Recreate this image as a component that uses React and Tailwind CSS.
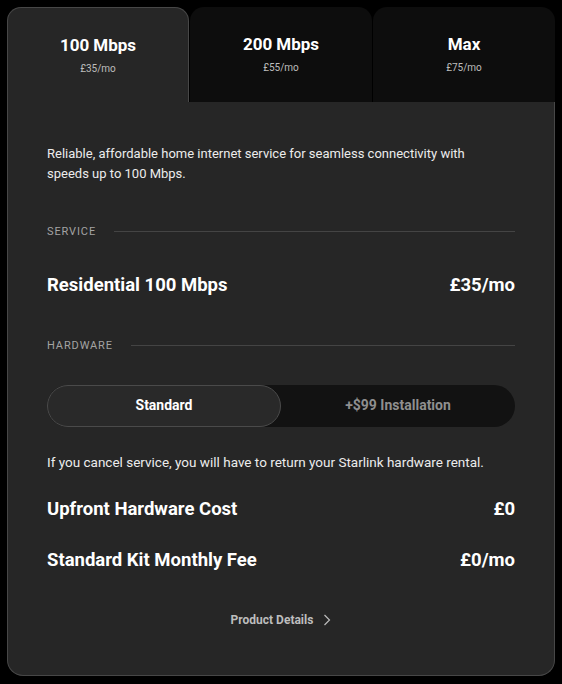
import React, { useState } from 'react';

const plans = [
  { name: '100 Mbps', price: '£35/mo' },
  { name: '200 Mbps', price: '£55/mo' },
  { name: 'Max', price: '£75/mo' },
];

const SectionLabel = ({ children }) => (
  <div className="flex items-center gap-[18px]">
    <span className="text-[11px] tracking-[0.08em] text-[#a3a3a3] leading-none">{children}</span>
    <div className="flex-1 h-px bg-[#444444]" />
  </div>
);

const Row = ({ label, value }) => (
  <div className="flex items-center justify-between text-[18.5px] font-bold text-white leading-none">
    <span>{label}</span>
    <span>{value}</span>
  </div>
);

export default function App() {
  const [active, setActive] = useState(0);
  const [hardware, setHardware] = useState('standard');

  return (
    <div
      className="w-[562px] h-[684px] bg-black p-[7px] text-white"
      style={{ fontFamily: 'Roboto, "Noto Sans", sans-serif' }}
    >
      <div className="flex gap-[1px]">
        {plans.map((plan, i) => (
          <button
            key={plan.name}
            onClick={() => setActive(i)}
            className={
              i === active
                ? 'w-[182px] h-[95px] bg-[#262626] border-l border-t border-r border-[#474747] rounded-t-[14px] flex flex-col items-center pt-[27px]'
                : 'flex-1 h-[95px] bg-[#0d0d0d] rounded-t-[14px] flex flex-col items-center pt-[27px]'
            }
          >
            <span className="text-[17px] font-bold leading-[20px]">{plan.name}</span>
            <span className="text-[10px] text-[#bdbdbd] mt-[8px] leading-[12px]">{plan.price}</span>
          </button>
        ))}
      </div>

      <div className="bg-[#262626] border-l border-r border-b border-[#474747] rounded-b-[16px] h-[574px] px-[39px] pt-[42px]">
        <p className="text-[13px] leading-[20px] text-[#ececec]">
          Reliable, affordable home internet service for seamless connectivity with
          <br />
          speeds up to 100 Mbps.
        </p>

        <div className="mt-[42px]">
          <SectionLabel>SERVICE</SectionLabel>
        </div>

        <div className="mt-[39px]">
          <Row label="Residential 100 Mbps" value="£35/mo" />
        </div>

        <div className="mt-[45px]">
          <SectionLabel>HARDWARE</SectionLabel>
        </div>

        <div className="mt-[34px] flex h-[42px] rounded-full bg-[#121212]">
          <button
            onClick={() => setHardware('standard')}
            className={
              hardware === 'standard'
                ? 'w-[234px] rounded-full bg-[#292929] border border-[#4a4a4a] text-[14px] font-bold text-white'
                : 'w-[234px] rounded-full text-[14px] font-bold text-[#8f8f8f]'
            }
          >
            Standard
          </button>
          <button
            onClick={() => setHardware('install')}
            className={
              hardware === 'install'
                ? 'flex-1 rounded-full bg-[#292929] border border-[#4a4a4a] text-[14px] font-bold text-white'
                : 'flex-1 rounded-full text-[14px] font-bold text-[#8f8f8f]'
            }
          >
            +$99 Installation
          </button>
        </div>

        <p className="mt-[27px] text-[13.5px] leading-[16px] text-[#ececec]">
          If you cancel service, you will have to return your Starlink hardware rental.
        </p>

        <div className="mt-[30px]">
          <Row label="Upfront Hardware Cost" value="£0" />
        </div>
        <div className="mt-[33px]">
          <Row label="Standard Kit Monthly Fee" value="£0/mo" />
        </div>

        <div className="mt-[41px] flex items-center justify-center gap-[10px] text-[12px] font-bold text-[#bdbdbd]">
          <span>Product Details</span>
          <svg width="8" height="12" viewBox="0 0 8 12" fill="none">
            <path d="M1.5 1 L6.5 6 L1.5 11" stroke="#bdbdbd" strokeWidth="1.2" />
          </svg>
        </div>
      </div>
    </div>
  );
}
